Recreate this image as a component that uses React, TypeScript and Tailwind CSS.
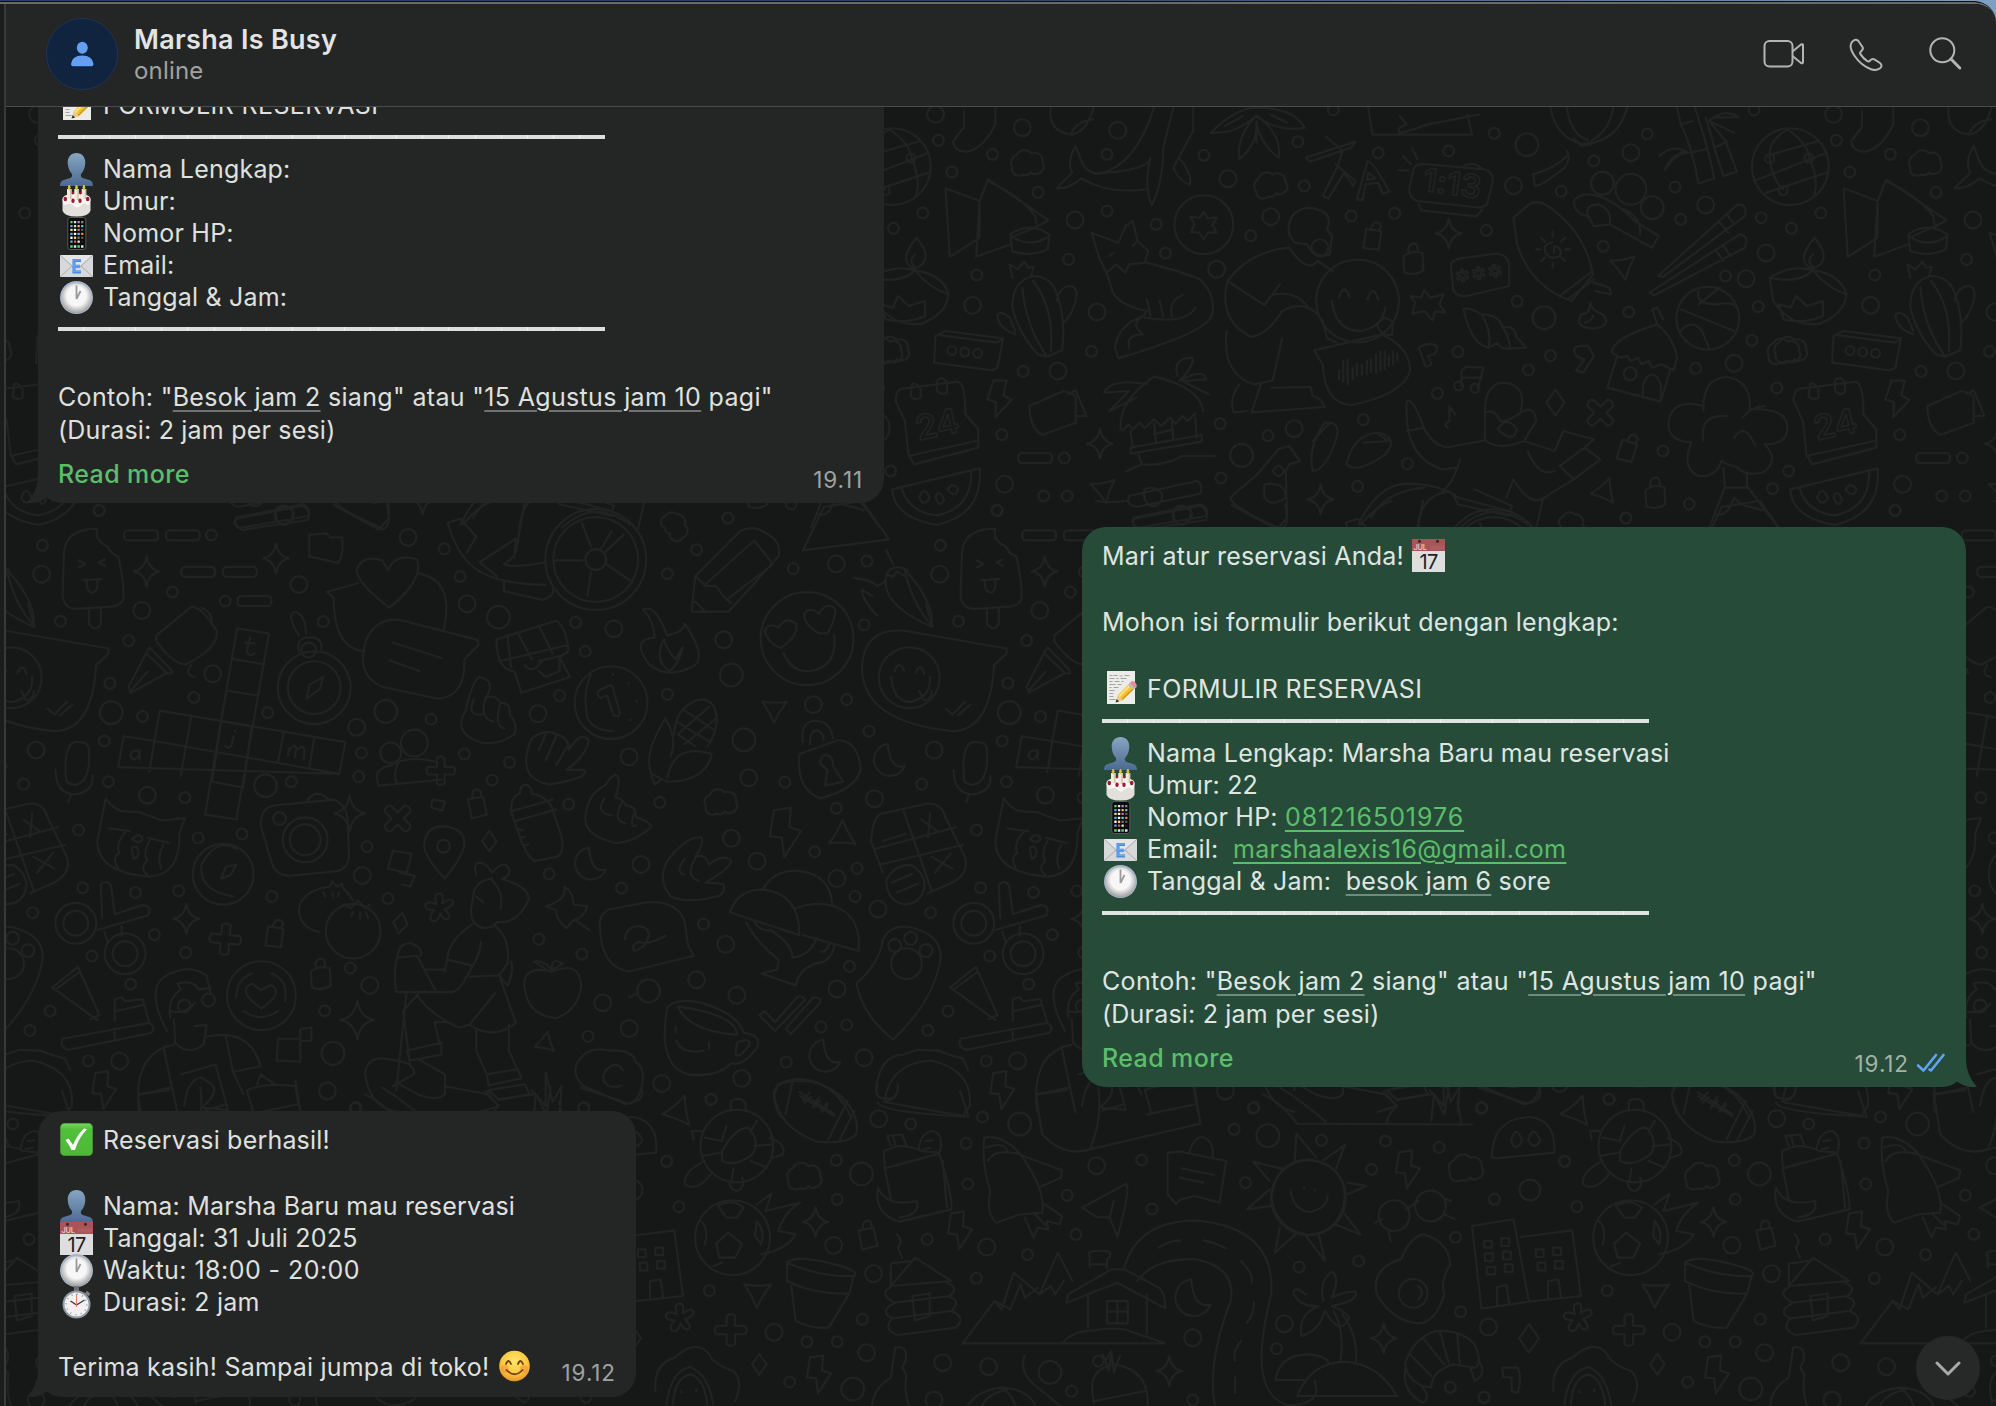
import type { ReactNode } from "react";

/* ---------- Wallpaper ---------- */

type Dot = [number, number, number];
type Stamp = [keyof typeof shapes, number, number, number?, number?];
type Label = [string, number, number, number, number];
type Band = { x: number; y: number; sx: number; sy: number; dots: Dot[]; stamps: Stamp[]; labels: Label[]; paths: string[] };

const PERIOD = 898;

const shapes = {
  cloud: "M-15 3a8 8 0 0 1 4-12a9 9 0 0 1 15-2a8 8 0 0 1 11 9a7 7 0 0 1-4 11q-5 2-7-1a6 6 0 0 1-8 2q-3 2-6 1a6 6 0 0 1-5-8z",
  sparkle: "M0-15Q2-2 13 0Q2 2 0 15Q-2 2-13 0Q-2-2 0-15z",
  bolt: "M-9-17L4-19L3-4L12-1L-1 19L-3 4L-12 3z",
  cross: "M-13-7Q-12-13-7-13L0-6L7-13Q12-13 13-7L6 0L13 7Q12 13 7 13L0 6L-7 13Q-12 13-13 7L-6 0z",
  tri: "M-12-7Q0-7 12-11Q6 0 3 12Q-3 2-12-7z",
  tag: "M-9-6L6-9L10 9L-5 13z M-5-7L-4-14Q0-18 4-14L4-9",
  diamond: "M0-13L9 0L0 13L-9 0z",
  pill: "M-13-5h26q4 0 4 5t-4 5h-26q-4 0-4-5t4-5z",
  moon: "M-2-16A16 16 0 1 0 15 6Q0 10-2-16z",
  flower: "M-3-4Q-6-15 0-15Q5-15 3-5Q12-12 14-6Q14-2 5 1Q13 8 8 11Q4 12 1 5Q-2 15-8 12Q-11 8-5 2Q-15 2-14-4Q-11-8-3-4z",
  lock: "M-9-4Q0-11 10-7L11 10Q2 16-8 12z M-4-8Q-5-16 1-17Q6-17 5-8",
};

const top: Band = {
  x: 880, y: 100, sx: 1.405, sy: 3,
  dots: [[78,40,8],[200,80,8],[82,118,5],[158,160,5],[101,213,5],[222,274,5],[334,88,8],[319,160,5],[455,163,5],[489,233,8],[587,122,5],[637,27,5],[596,255,5],[549,347,8],[521,404,5],[662,345,5],[723,337,5],[700,156,5],[799,150,5],[863,97,5],[909,131,11],[890,254,8],[957,271,5],[1003,180,5],[1055,155,8],[1078,99,5],[1117,258,5],[1160,312,8],[1125,355,5],[1238,350,5],[1228,27,5],[60,336,5],[19,382,5],[274,357,8],[319,330,5],[388,370,5],[401,456,5],[265,475,5],[473,505,8],[852,388,5],[895,601,5],[933,650,11],[1016,436,5],[1052,633,5],[1188,525,5],[1217,533,8],[1245,456,8],[136,522,5],[130,613,8],[305,633,8],[297,751,5],[201,811,5],[250,810,8],[171,1001,5],[259,1071,5],[15,1110,5],[175,1150,8],[230,1185,5],[263,1185,5],[164,1228,5],[478,968,5],[582,983,8],[545,1004,5],[508,1063,11],[479,1131,5],[671,1156,5],[741,1088,5],[679,956,5],[783,877,5],[812,752,5],[911,807,5],[942,764,5],[1146,802,5],[1200,787,8],[1234,617,5],[1225,718,5],[1260,861,5],[1100,1050,5],[1254,1163,5],[1137,1209,5],[1048,1251,5],[1015,247,11],[1055,265,15],[1085,320,11],[455,371,29],[101,749,4],[119,753,4],[137,757,4],[1054,818,6],[1163,652,31],[1279,197,38],[1250,173,4],[1305,171,4],[1269,269,4],[813,855,4],[836,862,4],[671,600,41],[618,440,8]],
  stamps: [["cloud",207,190],["cloud",549,255,-10],["cloud",1270,755],["cloud",18,750],["sparkle",799,397],["sparkle",309,1028],["sparkle",619,1195],["bolt",168,893,10],["cross",1012,935],["tri",313,1170],["tri",1043,500],["tri",1018,1178,-30],["tag",692,410,20],["lock",748,478],["tag",1050,1045,30],["lock",1088,1180],["pill",218,1071],["diamond",949,905]],
  labels: [["1:13",803,262,32,8],["24",82,985,34,-12],["***",843,545,30,-8]],
  paths: [
    "M1245 165L1318 120M1228 240L1330 155M1245 275L1330 215M1250 175Q1255 240 1269 265M1275 85Q1305 130 1306 172Q1320 240 1312 285M1250 170Q1247 120 1275 85",
    "M118 30V78L103 120Q103 150 122 152Q145 145 162 70V20M240 20Q235 90 268 101Q290 95 300 20M268 101Q275 60 300 55",
    "M275 135L282 175Q290 220 310 218Q360 190 385 20M275 135Q262 180 270 215L248 262Q265 265 283 232Q320 280 372 265M380 170Q370 260 382 312Q398 240 398 140L412 20M380 170Q378 210 300 218M420 170Q440 220 435 252Q420 240 412 200L440 90V20",
    "M529 20Q500 20 465 95Q500 100 528 45Q560 95 597 80Q580 20 529 20M528 45Q500 110 505 175Q530 130 529 70Q535 130 560 170Q565 100 530 45M485 75L510 45M572 65L548 40M529 125V60",
    "M686 20L692 101H832L825 40M730 45L740 70Q725 80 730 95L742 90L770 70L842 40",
    "M598 170L668 122L662 140L604 182ZM627 108Q640 130 650 150L642 200L622 285L630 292L652 215L665 255L668 240L640 190M685 180Q692 180 716 272L706 278L700 245L682 250L678 298L670 295ZM686 215L696 232L684 236Z",
    "M750 200Q755 186 770 190L850 205Q862 215 861 240L853 310Q848 322 835 318L755 300Q742 290 744 260ZM757 310L760 328L838 346L846 326M820 195Q835 178 847 205M735 165L746 190M748 142L755 175M728 208H742",
    "M942 20Q950 110 985 128Q1035 130 1050 20M965 20Q970 100 995 118M1030 20Q1025 90 1000 118M975 112L985 135L998 130M965 150Q972 170 962 200Q930 255 920 255L918 220Q950 200 965 165",
    "M975 300Q985 270 1010 285Q1040 310 1060 360L1094 405L1085 440L1025 370L1003 376L995 345Q975 340 975 300M995 345Q990 310 1010 310Q1030 330 1025 370M1045 325Q1070 350 1068 400",
    "M1120 20L1125 70Q1140 130 1150 248L1172 232Q1165 150 1145 20M1125 70L1142 60M1138 155L1160 145M1160 50Q1168 100 1172 140L1185 225L1204 212L1188 120L1165 60M1172 140L1190 122M1095 165Q1115 125 1135 155Q1120 155 1103 205Q1108 170 1130 150M1165 60Q1185 20 1206 48L1175 50M1165 60L1200 95",
    "M92 262L98 468L140 410V300ZM140 300L152 235L237 358L222 375L184 410V430L135 467ZM152 240Q200 290 218 345L220 370M183 400Q210 360 238 400L236 445Q210 470 186 450ZM184 405Q210 445 238 405",
    "M1313 410Q1285 480 1310 503Q1340 480 1313 410M1311 460Q1300 480 1311 498M1250 530Q1280 490 1311 508Q1350 520 1358 580Q1355 640 1320 668Q1280 680 1255 600ZM1250 530Q1290 550 1311 508Q1330 560 1358 580M1270 655L1262 610L1280 620L1287 585L1302 615L1325 600V645Q1300 670 1270 655",
    "M215 525Q185 540 186 620Q195 700 222 760L235 767L256 748Q262 640 245 560Q235 525 215 525M200 560Q205 680 235 767M215 540Q245 620 240 750M186 530L182 490L193 505L203 482L208 500L216 498L212 525M248 600Q252 560 265 555Q280 555 275 600Q268 650 256 668M190 700Q165 680 165 640Q172 630 182 650L190 690",
    "M78 705L92 690L173 712L165 800L157 808L76 785ZM85 703L165 725L173 712",
    "M318 515L308 470L297 395L335 425L345 375L355 360L362 420L377 450L372 485L350 490L345 515L332 490L318 515M322 465L328 455M355 435L360 425M375 485Q420 510 450 535Q475 590 465 650Q450 700 335 772L330 740Q335 670 370 645L375 630Q330 610 325 560L318 515M370 645Q350 670 370 700Q345 700 350 740M372 650Q430 670 443 620M375 595L380 645M393 600L398 645M410 645Q405 600 425 582",
    "M455 333L460 352L473 350L467 372L473 395L461 395L455 414L448 395L437 393L442 370L436 348L449 350Z",
    "M575 400Q570 330 602 320Q640 330 628 385L635 405L632 460Q610 475 600 430L582 425ZM575 440Q600 520 615 480M575 440Q520 450 488 540L540 612L562 550M488 540Q475 660 522 708Q545 700 565 630Q600 590 622 660L628 712L642 725M552 580Q585 570 600 615M615 480L636 510M487 690Q480 820 525 850L552 838L565 712M550 860L605 858L608 885Q620 890 625 918L522 934L535 850M505 850Q490 890 497 935L515 930",
    "M635 600Q640 690 675 690Q705 680 710 620M645 590Q652 540 660 590M685 595Q692 545 700 595M708 650L698 670Q705 710 720 700V660Z",
    "M610 748L705 700Q745 740 745 810Q735 880 663 912Q625 910 622 790ZM645 808V835M651 780V842M657 775V850M664 800V835M670 788V825M677 790V822M684 780V820M690 775V815M697 760V815M703 752V808M709 750V805M715 765V795M721 752V790M727 758V780",
    "M802 490Q803 478 815 472L865 458Q882 460 884 490V555L822 586Q806 585 805 560Z",
    "M890 350L912 310Q925 295 938 315Q990 390 1002 520L972 600Q915 560 895 430ZM958 580L1000 512M968 592L1003 535M1003 545L1025 560L1027 580L1005 570M945 425Q930 430 935 455Q942 480 955 465Q960 440 947 435V455M945 392V408M945 485V500M922 445H928M963 445H970M929 410L934 422M963 410L957 422M929 480L934 470M963 480L957 470",
    "M765 568L773 590L792 580L786 610L794 635L780 632L776 658L765 630L748 638L752 605L745 585L760 590Z",
    "M820 625Q825 615 845 640Q870 640 875 680L885 678Q895 690 893 705L908 740L885 743Q870 745 868 725L855 740Q830 730 820 625M845 640Q860 690 855 740M875 680Q885 710 885 743",
    "M998 605Q998 640 985 640Q975 680 1002 683Q1030 675 1015 640Q1000 630 998 605M990 665Q1000 660 1002 645",
    "M1093 525L1205 310Q1220 310 1215 345L1100 528ZM1081 575L1208 400Q1222 405 1215 440L1088 583ZM1190 340L1200 370M1180 365L1192 395M1185 435L1195 465M1175 450L1185 480",
    "M1125 625L1200 690M1150 570Q1145 610 1175 610Q1200 600 1203 620M1180 560L1150 610M1125 690Q1140 650 1155 690L1165 742",
    "M1092 670L1085 625L1092 620L1100 655M1092 670Q1030 710 1028 755L1040 770L1050 765L1055 780L1065 770L1070 790L1080 780L1085 800L1098 790L1115 808L1120 770Q1115 710 1092 670M1035 770L1022 860L1097 902L1110 810M1072 885V850Q1085 790 1097 850V900",
    "M22 900Q22 860 35 862L110 842Q120 850 120 940L138 985V1040L48 1090L40 1060L35 960ZM40 1065L135 1020M45 850Q50 840 57 865V890Q48 900 43 885ZM80 840Q87 820 94 845V875Q85 885 80 868Z",
    "M210 915L258 870Q275 880 275 890V965L228 1002Q210 980 210 915M265 880L275 868L290 945L275 945",
    "M338 985Q335 900 385 826Q450 860 454 930M340 988L350 970L355 985L365 965L372 982L385 955L395 975L408 950L415 968L425 945L432 960L443 938M352 990L355 1040M443 950L445 1010M352 1040L452 1002V1022L352 1058ZM362 1055L368 1090L345 1112M368 1090Q400 1095 425 1065H470M385 968L388 1025M410 960L412 1015M385 1000L412 985M418 825Q410 770 440 770Q440 800 420 840Q455 800 458 835L425 840L462 880M375 850Q325 830 315 875L350 870L322 930L360 890",
    "M350 1185L445 1140Q455 1150 450 1178L360 1218Q345 1210 350 1185M372 1165Q385 1150 397 1180Q395 1220 380 1215Q368 1200 372 1165M357 1250L450 1210Q463 1220 458 1245L365 1280Q350 1275 357 1250M412 1225Q425 1200 437 1230Q435 1275 420 1270Q408 1260 412 1225",
    "M17 1165L140 1102Q145 1240 80 1272Q20 1250 17 1165M30 1160Q40 1235 80 1243Q130 1220 128 1110M55 1190Q62 1150 70 1190Q62 1220 55 1190M78 1190Q82 1160 90 1195Q85 1225 78 1190M95 1165Q102 1140 110 1165Q105 1195 95 1165",
    "M817 855V810L823 797L848 800L840 862M818 830L845 830M757 740Q770 720 782 735Q785 760 770 765L775 790L767 798ZM975 745Q980 730 995 735L1003 765L988 815L978 808L990 775Q975 770 975 745M798 980Q790 970 800 960V915L808 940",
    "M740 900Q748 885 765 985Q780 1040 800 1038L850 1018V935Q862 920 872 960Q885 960 900 935Q920 910 922 960Q910 1000 905 1020L948 1050L960 990L1003 1015L990 1040L1012 1075L975 1135L955 1095L990 1040M740 900Q735 1070 790 1105L812 1100M815 1075Q805 1150 790 1170M850 930Q850 850 875 845Q910 850 900 930M910 1050Q925 1130 948 1110M890 1135Q915 1230 940 1180L975 1135M890 1135L880 1190M932 1190L922 1280M868 985Q880 940 895 985Q890 1030 868 985M850 1018Q870 1050 905 1020M740 990L765 980",
    "M625 965Q650 960 640 1020Q625 1110 608 1110Q600 1040 625 965M608 1020L632 965M655 1090Q665 1000 700 995Q730 1010 710 1060Q670 1120 655 1090M680 1025L715 1020L700 1000",
    "M560 1045L575 1035L590 1080L575 1090L570 1110L572 1250L560 1280Q495 1220 492 1190L530 1120ZM540 1150Q570 1140 570 1190Q550 1220 540 1190ZM552 1110Q560 1080 568 1110Q560 1140 552 1110",
    "M672 1270Q700 1150 740 1148Q790 1150 812 1190L885 1230L888 1215L835 1165M755 1280Q760 1180 800 1172M690 1250Q710 1170 765 1160M815 1280Q860 1190 910 1270M805 1180L812 1210L885 1245",
    "M1157 930Q1155 830 1190 828Q1225 840 1222 925Q1275 920 1275 980Q1275 1030 1243 1030Q1265 1080 1240 1115Q1215 1125 1205 1100Q1190 1090 1182 1080Q1175 1130 1150 1125Q1125 1100 1140 1025Q1105 1020 1108 960Q1115 890 1157 915M1157 1020Q1150 940 1190 945M1212 950Q1225 915 1243 915M1200 1010Q1215 960 1230 1035M1185 1100L1187 1160L1165 1280M1218 1115V1155L1262 1280M1187 1160H1218M1175 1240Q1190 1250 1200 1190L1210 1210L1240 1228",
  ],
};

const middle: Band = {
  x: 0, y: 500, sx: 1.4385, sy: 2.529,
  dots: [[143,24,5],[61,112,5],[60,185,8],[248,230,5],[204,277,8],[87,304,5],[185,353,5],[304,86,5],[324,253,5],[430,211,8],[465,305,5],[587,92,8],[639,121,5],[662,191,5],[672,260,8],[717,294,11],[828,307,5],[883,323,8],[842,380,5],[960,184,5],[1002,123,5],[1047,43,5],[1141,171,5],[1203,159,8],[1247,152,5],[1243,313,5],[1041,351,8],[1052,440,11],[306,437,8],[279,497,5],[385,535,5],[160,535,11],[205,545,5],[158,461,5],[150,607,5],[52,630,8],[34,716,5],[156,710,5],[212,744,8],[266,750,5],[382,720,11],[419,710,5],[513,572,8],[555,532,11],[620,552,5],[668,640,5],[708,706,5],[733,661,5],[774,538,8],[805,492,5],[960,489,5],[905,647,8],[1070,604,11],[1170,515,8],[1218,502,5],[1250,582,5],[1077,700,8],[1129,711,5],[818,767,5],[949,762,5],[1203,777,5],[1258,753,8],[1172,887,5],[1052,853,8],[1089,911,8],[922,919,8],[790,943,5],[894,979,5],[1012,1070,5],[1230,1000,5],[1233,929,5],[1204,955,8],[1263,1032,8],[1222,1177,5],[1044,1121,8],[837,1146,5],[775,1108,5],[867,1269,8],[933,1239,11],[1002,1211,8],[1060,1250,8],[1204,1234,8],[1181,1330,5],[1218,1325,5],[1243,1408,8],[1131,1419,5],[905,1334,8],[846,1354,5],[952,1473,8],[1067,1460,8],[1023,1513,5],[840,1534,5],[512,1534,5],[471,1492,8],[479,1397,11],[532,1225,8],[504,1181,5],[467,1289,5],[267,1142,5],[222,1097,5],[257,986,5],[195,990,5],[119,978,5],[47,1041,5],[132,1151,5],[188,1222,5],[72,1290,5],[43,1339,5],[127,1416,5],[172,1416,8],[391,1000,5],[521,947,8],[528,874,5],[348,842,5],[285,852,5],[113,832,5],[558,1005,5],[516,697,5],[520,637,5],
    [857,148,50],[857,148,42],[857,148,10],[1161,348,46],[452,472,36],[452,472,26],[444,377,7],[879,510,36],[439,857,22],[439,857,15],[402,803,6],[321,944,30],[638,873,6],[376,1251,34],[109,1068,20],[109,1068,12],[180,1145,20],[180,1145,12],[1308,447,30],[596,612,13],[562,637,10],[1304,1170,15],[1287,1124,6],[1310,1106,6],[1332,1137,6],[265,1277,6],[300,1262,6],[508,1088,27]],
  stamps: [["pill",203,87],["pill",263,87],["pill",285,179],["pill",345,179],["pill",366,253],["sparkle",211,178],["sparkle",397,145],["sparkle",514,1313,0,1.3],["sparkle",268,1057],["sparkle",503,790,0,1.2],["cross",572,803],["cross",324,1108,50],["tag",395,1098,20],["lock",460,1200],["tag",686,770,0],["diamond",576,1068,10,0.8],["cloud",1037,765],["moon",1280,655],["moon",850,917],["moon",1187,1403],["bolt",1130,838,0,1.3],["bolt",150,1490],["tri",1112,530,10],["tri",785,1375,-40,0.8],["tri",1213,852,-50,1.1],["diamond",704,860,0,0.8],["flower",632,1030],["cloud",970,65,60,0.9],["cross",634,682,45,0.9]],
  labels: [],
  paths: [
    "M92 130Q95 70 140 70Q135 100 155 115Q160 135 170 140Q178 200 178 245Q175 265 160 267L110 273Q92 272 90 240ZM128 272V310Q138 335 145 310V270M113 150L123 160L113 168M150 148L142 156L151 164M120 200L146 197M125 200Q124 230 133 232Q142 228 140 198",
    "M340 45L435 12Q448 25 443 48L350 73Q335 65 340 45M397 25Q410 0 423 30Q420 62 407 60Q395 55 397 25M445 85L470 82L475 92H492Q495 130 487 157L445 140ZM480 10L545 72Q565 75 557 10",
    "M644 55L662 45L685 90L672 130M644 55Q660 150 690 178Q720 210 785 212M690 155L742 95L740 140L725 160Q740 170 785 155M725 205V228L780 250Q800 240 795 215M665 60Q690 10 710 0M755 0L742 130M690 155L715 190",
    "M995 280L1000 190L1065 75Q1085 60 1100 80Q1125 100 1120 140L1048 280ZM1000 190L1015 215L1030 215L1040 240L1052 260M1015 210L1085 100L1112 160L1045 250M1000 255L1015 280M1155 125L1185 15M1185 15L1240 0L1279 97L1155 125",
    "M837 55L850 115M880 75L865 120M797 150H838M872 160L910 205M850 180L845 240M897 85L870 130",
    "M560 270Q515 210 513 175Q520 135 550 150L558 175Q570 130 600 148Q610 200 560 270M515 208L470 230L480 245Q480 375 525 380M602 183Q655 200 638 328",
    "M527 350Q545 285 585 305L688 352V365L668 400Q670 495 630 500L550 470Q510 440 527 350M565 358L635 397M560 403L603 430",
    "M714 350L800 303Q815 320 818 380L805 395L820 445L750 485L740 430Q715 430 714 350M735 420L730 340M765 400L745 335M795 385L775 315M718 405L815 365M755 415Q765 440 780 405M775 405L805 392V430L785 445L775 430M740 430L745 460",
    "M925 275Q940 260 955 320L960 340Q985 330 985 310Q1020 400 995 420Q960 450 935 415Q905 350 942 345Q940 300 925 275M962 430Q940 400 955 350Q960 380 972 400L982 370Q975 420 962 430",
    "M1123 372Q1105 360 1100 330Q1105 305 1120 320Q1130 290 1145 310Q1150 340 1123 372M1178 335Q1155 310 1157 285Q1165 265 1178 285Q1190 250 1202 275Q1200 310 1190 335ZM1127 385Q1140 435 1165 430Q1205 420 1200 340",
    "M1228 195Q1255 200 1262 215Q1275 205 1275 190Q1265 260 1340 318Q1345 260 1305 180M1262 290Q1240 250 1240 225L1255 240M1275 185Q1285 155 1305 175L1302 190L1290 178L1285 192ZM1285 160L1275 125",
    "M1240 430Q1240 320 1300 328L1448 373V385L1430 415Q1425 580 1370 582Q1245 560 1240 430M1282 445Q1285 510 1310 508Q1340 495 1338 445M1287 430Q1293 400 1301 430M1317 435Q1324 405 1330 438M1322 480L1330 505Q1342 500 1340 480M1360 525L1370 540L1388 508M1378 542L1396 515",
    "M225 340L275 268Q290 265 312 330Q315 370 268 413Q250 415 225 355ZM215 370L245 425Q252 440 240 435L210 385ZM210 385L185 470L188 485L240 435M188 480L212 432M275 415Q265 440 280 445M290 270Q305 280 305 310",
    "M341 322L387 335L340 805L295 793ZM336 400L380 413M328 480L370 492M318 557L362 570M306 710L350 725M230 530L497 610L488 690L170 673L178 595L222 607ZM275 545L260 695M222 607L215 685M318 560L305 710M362 570L350 720M408 585L400 660M452 598L445 675M222 607L488 690",
    "M360 345Q355 370 356 385Q360 395 366 385M352 358L366 360M199 632Q188 628 188 645Q192 662 199 645L201 630V655M336 595L333 618Q330 628 324 620M338 580V583M416 625L414 645M416 630Q424 612 426 625L424 648M427 630Q436 615 438 628L437 652",
    "M430 340Q410 285 425 280Q440 290 440 335M430 380Q425 345 445 345Q465 345 462 375M441 500L445 465L465 445L460 475Z",
    "M690 445Q715 455 698 500Q710 485 720 510Q735 510 733 540Q745 560 740 590Q715 620 690 610Q650 585 670 530Q680 450 690 445M682 500Q670 545 695 540M698 500Q690 550 710 558M720 510Q710 570 725 575",
    "M765 600Q785 575 800 590Q820 600 818 630Q835 580 847 605Q845 640 815 680L840 680Q850 700 790 717Q740 700 765 600M785 590L775 630M800 595L785 655M818 615L800 668",
    "M861 480L877 466Q881 466 882 475L892 538Q889 548 883 542L873 492L864 498Q858 492 861 480M850 440Q838 480 845 550Q855 580 880 582M882 437V440M904 460V463M916 505V508M907 552V555",
    "M1000 505Q1015 495 1025 515Q1040 560 1018 620M1000 505Q970 530 970 590M957 550Q925 640 937 690L960 710Q1015 710 1024 640Q970 610 960 700M957 550Q975 600 965 645M937 695L942 718L950 705M985 530L1028 580M975 560L1022 610M1020 520L975 590M1030 550L985 615M975 590L1000 620",
    "M1155 610Q1150 555 1175 556Q1195 560 1198 600M1165 615Q1165 580 1175 580Q1185 585 1185 605M1150 640L1205 605Q1235 605 1238 680Q1230 730 1180 752Q1145 730 1150 640M1180 665Q1180 640 1190 643Q1200 650 1198 670L1213 710L1187 720L1190 680Z",
    "M95 705Q90 600 115 610Q130 610 128 640Q130 710 108 718Q95 715 95 705M80 680Q80 740 108 742Q135 735 133 695M102 742L98 762M545 720L635 705M545 720Q535 680 560 670L575 658Q600 645 628 660M570 715Q565 680 575 658",
    "M152 752Q165 785 180 785L200 787L233 808L266 802L258 840Q260 945 215 950Q140 940 140 860ZM157 828L187 835M213 852L243 865M180 838Q165 870 172 890Q160 900 170 930M215 860Q205 890 212 910Q200 930 212 945M235 870Q225 900 232 930M190 885Q188 870 197 875Q203 900 192 905ZM190 855Q200 835 205 855Q200 870 190 855",
    "M375 820Q375 775 395 770L480 755Q500 770 500 810L502 900Q500 935 480 937L415 948Q395 945 390 910ZM442 758Q455 725 473 755M318 955L325 925L340 920L332 945ZM340 880Q310 850 290 920Q285 985 335 1000",
    "M640 955Q605 890 611 860Q615 820 640 823Q670 830 668 870Q665 900 640 955M565 885L592 892L585 940L558 930ZM575 940L597 948L590 975L578 970M622 755L640 760L636 783L620 775Z",
    "M735 785Q735 745 748 740Q748 715 758 718Q765 725 765 740Q790 750 795 780L808 850Q812 895 800 900L770 910Q760 905 750 860ZM735 785L795 755M740 810L800 780M745 830L752 833M748 850L755 850M752 872L760 868",
    "M885 692Q895 700 885 750Q895 750 900 770Q915 770 915 800Q935 810 937 825Q910 865 885 865Q840 845 842 800Q845 740 870 720Q880 695 885 692M870 750Q855 790 880 795M895 760Q880 810 900 815M912 790Q905 830 915 820",
    "M1008 850Q1015 860 1000 900Q1015 890 1020 920Q1040 890 1052 910Q1050 930 1015 965L1040 968Q1045 985 1035 998Q990 1020 965 1000Q945 960 960 910Q985 850 1008 850M985 905Q970 940 985 945M1000 905Q985 950 1005 960",
    "M1050 1040Q1060 985 1095 982Q1150 990 1150 1098ZM1098 980Q1115 930 1150 936Q1195 945 1197 1020M1145 1030Q1175 1010 1200 1025Q1240 1050 1235 1138L1155 1098M1073 1065Q1090 1120 1120 1160L1118 1185L1095 1195L1145 1225Q1150 1175 1185 1165Q1200 1150 1200 1120M1085 1065Q1095 1090 1108 1085M1108 1085Q1140 1120 1140 1155Q1165 1150 1175 1105M1180 1140Q1190 1140 1193 1120",
    "M1253 860Q1255 795 1270 790L1335 765Q1355 765 1360 800L1388 900Q1395 940 1370 965L1335 992M1253 860L1270 940M1300 785L1340 985M1258 880L1375 825M1265 920L1385 870M1270 860L1302 842M1325 805L1348 835M1338 790L1335 850M1340 900L1370 930M1368 890L1345 940M1275 960Q1285 920 1310 920Q1330 940 1330 975Q1325 1020 1300 1020Q1275 1010 1275 960M1283 965L1312 943M1290 990L1320 968",
    "M147 1055L145 970Q155 955 160 975L165 1045L205 1022Q220 1025 213 1048L140 1085M150 1090L155 1115M175 1075V1100M460 1090Q430 1080 430 1030Q435 985 475 975L478 962L485 975L492 968L493 978Q500 990 508 1010M465 990L468 1000M478 990L480 1005M488 990L486 1000M495 1020L505 1030L515 1010L525 1030L532 1020M508 1040L505 1050M518 1040L518 1055M526 1040L530 1055",
    "M685 945Q680 915 690 915Q700 915 708 940Q725 905 732 930Q735 950 722 955Q765 980 760 1010Q745 1070 715 1065L710 1075Q690 1090 680 1060Q675 1040 680 1010Q680 960 708 955M708 960Q725 990 720 1030M685 1000L695 1015M680 1070Q645 1110 643 1160L680 1175Q690 1150 692 1115M713 1075Q735 1110 730 1170L718 1200L675 1203M610 1185H640M643 1160L640 1190M680 1175Q660 1245 650 1242H570Q565 1180 572 1155L600 1150L627 1240M572 1155Q572 1120 590 1118Q610 1130 605 1150M585 1240L570 1490M605 1240L580 1290L590 1430M735 1165Q740 1190 730 1225L718 1200L742 1320Q710 1365 675 1325L712 1245M600 1250Q620 1300 660 1332L675 1325M585 1390L635 1370V1400L590 1415ZM625 1318H642M625 1318L632 1370M685 1335V1390L700 1450M732 1325V1390L745 1440M700 1450L745 1437L750 1460L703 1478ZM703 1490L755 1475L762 1500L718 1515Z",
    "M785 1025Q815 1010 812 975Q825 990 825 1020L845 1025Q840 1055 825 1060L815 1080Q800 1060 800 1035ZM828 1060L848 1085M755 1235Q750 1190 775 1185L795 1190Q835 1160 836 1230Q830 1290 800 1308Q760 1300 755 1235M790 1190Q765 1160 768 1165Q785 1160 795 1190Q790 1150 810 1170L790 1190",
    "M863 1080Q860 1035 885 1030L930 1015Q975 1010 985 1065L990 1125L998 1150L905 1190Q865 1180 863 1080M905 1255L918 1245M899 1108Q900 1080 915 1075Q935 1075 933 1100Q930 1130 912 1138Q908 1118 920 1115Q930 1125 957 1100",
    "M960 1280Q975 1255 1010 1270Q1060 1295 1070 1345Q1095 1350 1090 1380Q1070 1430 1052 1422Q1030 1460 990 1450Q945 1430 960 1280M975 1278Q990 1340 1060 1350Q1060 1300 975 1278M1060 1370Q1080 1355 1078 1375Q1065 1410 1058 1400ZM973 1365Q980 1400 1012 1390M972 1330V1345M1020 1370V1385",
    "M1092 1300L1115 1340L1158 1262Q1152 1245 1145 1258L1115 1318L1100 1290ZM1130 1335L1170 1255Q1185 1255 1178 1272L1138 1348Z",
    "M1232 1220Q1265 1170 1270 1110Q1280 1070 1310 1078Q1360 1100 1352 1170Q1340 1270 1285 1362Q1240 1300 1232 1220",
    "M75 1230L112 1178L143 1300L130 1310M75 1230L130 1300L140 1312M80 1235L115 1190M165 1315V1260L175 1255L180 1265L205 1260L215 1320M90 1360L215 1320Q225 1330 218 1345L98 1388Q85 1380 90 1360M165 1335V1362M167 1290L205 1275",
    "M240 1340Q210 1240 235 1205Q270 1165 297 1200L303 1245M245 1305Q240 1260 260 1235L255 1220Q280 1210 285 1235L303 1232M245 1290Q265 1300 280 1270M250 1310L252 1370Q270 1405 293 1375L297 1325L280 1328M200 1545Q190 1395 250 1375M295 1355Q360 1330 375 1430L335 1443L325 1355M200 1500L243 1490M235 1380L255 1545M260 1450L310 1425L328 1540L293 1535M265 1530Q270 1460 290 1458L300 1470Q320 1490 290 1535M355 1490Q380 1470 425 1480L432 1550M355 1490L365 1550M370 1475L375 1450L395 1475M335 1443L350 1500",
    "M376 1283Q340 1240 362 1220L376 1238Q395 1210 397 1245Q395 1260 376 1283M362 1195Q340 1210 340 1255M390 1195Q415 1210 410 1265M350 1290Q375 1320 400 1290M400 1360H432V1418L398 1415ZM432 1335L448 1332V1365H432Z",
    "M525 1445Q530 1400 560 1412Q600 1420 595 1450L565 1480M525 1445Q530 1530 570 1545M600 1410L640 1450V1500Q630 1520 600 1500L570 1470M640 1480L700 1500L718 1530L690 1545M765 1490L785 1530L785 1445L795 1520L808 1480L805 1545",
    "M840 1400Q855 1380 875 1390Q910 1385 915 1420Q930 1435 922 1490Q915 1525 900 1525L840 1480Q815 1440 840 1400M896 1440Q890 1420 880 1428Q866 1440 868 1465Q875 1490 895 1478",
    "M1260 1490Q1265 1400 1300 1400L1320 1388L1350 1390L1365 1400L1385 1410L1393 1440M1272 1520Q1280 1420 1340 1415Q1400 1440 1395 1530L1385 1555L1272 1520M1285 1510Q1255 1520 1262 1480",
    "M1113 1500Q1115 1465 1150 1462Q1200 1465 1225 1560M1113 1500Q1115 1540 1125 1560M1140 1470L1130 1550M1150 1495L1200 1550M1155 1515L1165 1495M1170 1530L1178 1508M1182 1545L1190 1522",
    "M40 260L50 318Q20 260 10 175M285 0Q300 5 330 0",
  ],
};

const bottom: Band = {
  x: 640, y: 1080, sx: 1.1563, sy: 3,
  dots: [[82,55,5],[31,241,5],[45,377,5],[227,238,5],[228,355,5],[276,113,8],[313,129,5],[396,108,5],[377,187,5],[439,129,11],[256,279,11],[379,309,5],[494,343,5],[528,254,8],[580,237,5],[687,145,5],[709,82,5],[726,164,11],[788,178,5],[862,180,5],[924,199,5],[973,82,5],[1069,241,5],[846,265,5],[700,305,5],[592,384,5],[504,460,5],[448,521,5],[401,498,8],[332,475,5],[224,493,8],[270,578,8],[389,592,5],[80,629,5],[257,715,5],[155,754,8],[193,782,5],[228,782,5],[262,815,8],[350,845,8],[403,857,8],[474,874,11],[173,903,5],[246,924,11],[340,957,8],[499,931,5],[639,770,8],[639,957,5],[745,728,8],[736,803,5],[762,558,5],[831,540,5],[988,355,5],[943,469,5],[949,692,5],[981,738,8],[937,919,5],[976,949,5],[1029,327,10],[872,404,15],[914,375,15],[773,350,37],[107,470,37],[112,195,36],[530,840,5],[894,637,14]],
  stamps: [["cloud",190,290,0,1.05],["cloud",955,265,0,1.05],["bolt",888,265],["bolt",370,448],["bolt",207,880],["sparkle",203,423,0,1],["sparkle",612,870,0,1],["sparkle",860,772,0,1],["tri",134,640,10,1.1],["tri",45,100,-30,1.2],["flower",46,712],["cross",105,747,45],["diamond",1028,772,0,1.1],["diamond",138,850,0,0.8],["moon",640,650,0,1.15],["tag",263,467,0,1]],
  labels: [],
  paths: [
    "M160 10Q200-20 230 40Q255 100 250 160Q240 190 205 182Q160 140 155 40ZM185 45L225 105M190 65L198 48M200 80L208 60M210 92L217 72M218 175L240 60M230 180L248 90",
    "M95 210Q110 140 125 140Q140 180 130 220Q110 260 95 240ZM100 135L95 175M135 120L128 150M153 190L132 195M147 260L128 240M106 298L108 262M72 225L93 215M75 170L95 180M75 240Q50 270 52 310Q65 335 82 280M105 88V60Q115 45 122 65V90M150 170Q170 190 165 220L152 232M62 175L60 150L72 150M103 300Q105 330 112 330Q122 320 118 290",
    "M283 262L346 218Q362 350 360 385L300 422Q270 400 275 320Q285 380 320 360Q325 400 300 410M283 262L282 210L298 195Q315 195 325 210L345 215M290 195L286 165L303 160L308 192M295 190L293 168M322 205Q325 150 340 150Q352 165 346 218M330 180L338 178M328 205L336 200M283 262L290 355M350 240L355 380",
    "M398 170Q420 160 440 220Q470 330 465 395L440 400L412 425Q400 400 405 330Q395 250 398 170M400 200Q420 180 425 210M402 240Q410 200 440 220M440 222L488 268L487 290L462 318M465 365L488 405L485 430L470 420L472 445L460 440L455 470L445 410M455 395L470 435",
    "M511 380L562 308Q568 320 552 467L543 410L528 408ZM543 410L548 358M610 215L625 212L678 240L670 365L642 345L625 355L620 370L610 340ZM635 215Q640 170 650 168Q665 180 662 230M626 262L664 282M624 290L651 305",
    "M730 350Q735 240 773 235Q815 250 815 350Q810 455 773 462Q735 445 730 350M745 265L709 242L728 300M757 240L759 158L782 230M790 238L815 192L805 262M818 305L840 315L818 340M815 400L833 460L803 430M785 462L792 540L770 465M740 440L734 515L758 460M730 375L702 385L728 325M752 325Q755 390 775 393Q795 380 795 345M768 318V322M780 325V330",
    "M858 415L850 425M932 355L938 360M930 400L942 415M865 445L868 480M886 385L900 360M985 230Q985 110 1030 108Q1060 120 1057 215L990 232ZM1007 180Q1013 125 1020 180Q1013 215 1007 180M1027 178Q1033 125 1041 180Q1033 210 1027 178",
    "M560 560Q575 420 643 418Q735 440 730 640Q700 940 750 973Q790 970 780 900M575 600Q595 530 643 535Q690 560 683 660Q655 850 665 978M600 500Q612 478 625 478M652 478Q665 485 677 502M695 540Q710 580 707 605M710 665Q710 700 702 725M695 780Q685 810 688 838M688 890V935",
    "M373 787H607L560 745Q540 740 525 748Q500 750 490 782M373 787L410 660L418 685L432 575L462 640M410 660L428 685L440 610L445 650L460 620M462 640L483 515L500 600M462 640L475 615L480 640L490 600M493 665L552 605L607 682Q608 640 600 620L560 565H545L495 640ZM518 640V740M586 640V760M540 660H564V727H540ZM552 660V727M540 692H564M520 560V525Q515 510 530 510H540Q548 520 540 535V560M520 550H540",
    "M770 640Q755 610 756 640Q765 680 785 675Q760 700 765 765Q785 750 792 690Q810 770 820 710Q815 690 800 675Q830 660 828 632Q815 630 800 650Q810 590 800 572Q785 600 790 660M802 690Q815 750 810 840M812 700Q830 760 828 840M735 895Q740 820 773 820Q795 825 797 850M735 897H768M760 945Q775 845 815 842Q855 850 875 945Z",
    "M905 460Q935 480 937 550Q925 600 930 640Q920 725 900 727Q870 720 852 640Q845 560 880 535Q890 470 905 460M900 615Q908 635 900 655",
    "M962 435L1010 415L1028 662L973 683ZM1018 468L1078 448L1088 645L1028 662M976 480H985V500H976ZM996 472H1005V495H996ZM977 517H986V540H977ZM998 512H1007V535H998ZM979 558H989V580H979ZM1000 550H1009V573H1000ZM1036 505H1045V528H1036ZM1056 500H1065V522H1056ZM1038 545H1047V568H1038ZM1058 540H1067V563H1058ZM991 670V618L1002 612L1005 668M1050 650V600L1062 595L1065 648",
    "M90 375Q105 350 120 380L112 410H100ZM88 488L102 455L118 488L110 530H92ZM135 420Q145 450 140 490L133 465ZM70 420Q80 440 75 490M85 555L95 545M135 370L152 338L145 390L185 365Q165 400 160 450L180 460Q170 505 140 520",
    "M170 545Q180 520 225 550Q255 570 247 585Q210 590 170 545M170 545V600Q200 640 242 638L247 585M175 615L180 720Q200 745 218 740L242 638",
    "M290 615L318 530L360 600L290 615M290 548V610M290 548L312 540M297 460Q305 480 298 500L303 530M290 618Q275 640 295 665L358 645Q370 620 355 605M295 665Q275 690 292 712L360 690Q372 660 358 648M292 712Q280 745 298 762L365 740Q378 710 360 690M315 645L335 638V705L318 718Z",
    "M18 930Q15 850 40 830Q65 770 80 820Q85 850 108 870Q120 900 110 960M30 978Q35 870 58 858Q80 880 85 978M38 970Q40 890 58 880Q75 890 78 978M48 930V935M65 925V930",
    "M295 800Q310 790 307 840L303 860L308 880Q305 940 312 978M295 800L290 890Q270 920 268 978M445 825Q435 880 470 940L487 978M378 978Q390 925 420 920Q450 925 458 978M395 978Q400 940 425 925M435 978Q430 940 420 925M525 965Q515 860 550 850Q590 870 587 978M525 960L585 930M545 810L538 840L535 820L542 870L545 812L548 875L555 825L550 860",
    "M885 845Q895 770 920 750Q950 745 965 790Q975 850 965 860L940 850Q915 870 915 920L905 915Q885 890 885 845M905 770L930 850M925 752L935 845M945 760L948 850M890 820L915 885M885 860Q880 930 905 965Q915 950 905 920M970 840Q980 880 965 900L960 860M997 860H1015Q1020 890 1015 935L1008 930V890L998 888Z",
    "M275 65Q280 95 380 107L370 30M285 60Q300 50 298 10M458 42L495 20M458 42L465 160Q490 230 520 205L648 128L640 0M535 88L560 70M586 100L642 70M520 205Q535 120 530 20M760 128L962 131M760 128Q740 60 720 40M793 122Q760 50 740 20M863 125Q865 100 875 75L860 30M915 120L918 40L930 100L935 20M950 130L945 60M970 20L1025 68Q1045 60 1040 20M875 55L915 40",
  ],
};

function DoodleBand({ band, offset }: { band: Band; offset: number }) {
  const labels = band.labels.filter(([, x]) => {
    const left = band.x + x / band.sx + offset;
    return left > 900 && left < 1950;
  });
  return (
    <g transform={`translate(${band.x + offset} ${band.y}) scale(${1 / band.sx} ${1 / band.sy})`}>
      {band.dots.map(([x, y, r], i) => (
        <ellipse key={i} cx={x} cy={y} rx={(r + 0.4) * band.sx} ry={(r + 0.4) * band.sy} vectorEffect="non-scaling-stroke" />
      ))}
      {band.stamps.map(([kind, x, y, rotation = 0, size = 1], i) => (
        <path
          key={i}
          d={shapes[kind]}
          transform={`translate(${x} ${y}) scale(${band.sx} ${band.sy}) rotate(${rotation}) scale(${size})`}
          vectorEffect="non-scaling-stroke"
        />
      ))}
      {labels.map(([text, x, y, size, rotation], i) => (
        <text
          key={i}
          fontSize={size}
          textAnchor="middle"
          fontFamily="Inter, sans-serif"
          fontWeight="600"
          transform={`translate(${x} ${y}) scale(${band.sx} ${band.sy}) rotate(${rotation}) translate(0 ${size * 0.2})`}
          strokeWidth="1.6"
        >
          {text}
        </text>
      ))}
      {band.paths.map((d, i) => (
        <path key={i} d={d} vectorEffect="non-scaling-stroke" />
      ))}
    </g>
  );
}

function Wallpaper() {
  return (
    <svg
      className="absolute inset-0 h-[1300px] w-[1990px]"
      viewBox="6 106 1990 1300"
      fill="none"
      stroke="#212322"
      strokeWidth="2.2"
      strokeLinecap="round"
      strokeLinejoin="round"
      aria-hidden
    >
      {[-1, 0, 1, 2].map((n) => (
        <g key={n}>
          <DoodleBand band={top} offset={n * PERIOD} />
          <DoodleBand band={middle} offset={n * PERIOD} />
          <DoodleBand band={bottom} offset={n * PERIOD} />
        </g>
      ))}
    </svg>
  );
}

/* ---------- Emoji ---------- */

type EmojiName = "memo" | "person" | "cake" | "phone" | "email" | "clock" | "calendar" | "check" | "stopwatch" | "smile";

const appColors = ["#5fd35f", "#e8e8e8", "#b78be0", "#8a8a8a", "#4fb4f0", "#dddddd", "#e6c34a", "#5bd0c8", "#f0e05a", "#ffffff", "#e05a9a", "#5a5a5a", "#46b1ee", "#ffffff", "#58c4f0", "#f08a2c", "#ffffff", "#f2d35e", "#707070", "#555555", "#57b8ef", "#e05555", "#eeeeee", "#222222"];

const emojiArt: Record<EmojiName, ReactNode> = {
  memo: (
    <>
      <path d="M3 0h28v33H3z" fill="#ecece9" />
      <path d="M5.500 4.500h3m1 0h4m2 .5h3m2-.5h5M5.500 7.500h5m2 0h2m2 0h6M5.500 10.500h3m2 0h5m2 0h2M5.500 13.500h6m2 0h4M5.500 16.500h2m2 0h5M5.500 19.500h5M5.500 22.500h4M5.500 25.500h4M5.500 28.500h6" stroke="#a2a2a0" strokeWidth="1" />
      <path d="M12 31l2-7L26 12l5 5-12 12z" fill="#f6c22f" />
      <path d="M14.500 26L27 13.500" stroke="#ffe37a" strokeWidth="2" />
      <path d="M17.500 29L30 17" stroke="#d8941c" strokeWidth="1.600" />
      <path d="M12 31l2-7 5 5z" fill="#ecc893" />
      <path d="M11.500 31.500l1.200-3.500 2.500 2.500z" fill="#333" />
      <path d="M25 13l2-2.500q3-1.500 5 2t-1 5z" fill="#e98b96" />
      <path d="M24 14l2-2 5 5-2 2z" fill="#b9bdc1" />
    </>
  ),
  person: (
    <>
      <defs>
        <linearGradient id="bust" x1="0" y1="0" x2="0" y2="1">
          <stop offset="0" stopColor="#86a6c3" />
          <stop offset="1" stopColor="#4c6a90" />
        </linearGradient>
      </defs>
      <path d="M16.500 0C22 0 25.500 4 25.300 10c-.2 5-2 8.500-4.300 11-.5 3 .5 4 5 5 5 1.200 7 2.500 7 7H0c0-4.500 2-5.800 7-7 4.500-1 5.500-2 5-5-2.300-2.500-4-6-4.300-11C7.500 4 11 0 16.500 0z" fill="url(#bust)" />
    </>
  ),
  cake: (
    <>
      <path d="M2.500 14v11.500Q4 31.500 16.500 31.500T30.500 25.500V14z" fill="#e3e0db" />
      <ellipse cx="16.500" cy="14" rx="14" ry="5.500" fill="#f8f7f4" />
      <path d="M2.500 14.500Q3 21.500 7 19.500T14 21t7-.5 6-1 3.500-4.500" fill="#f8f7f4" />
      <path d="M7 4h4.500v10H7zM14.300 4h4.500v11h-4.500zM21.700 4h4.500v10h-4.500z" fill="#f3ecda" />
      <path d="M10 4h1.500v10H10zM17.300 4h1.500v11h-1.500zM24.700 4h1.500v10h-1.500z" fill="#cfc4ab" />
      <path d="M9.200 0q2 2.500 0 5-2-2.500 0-5zM16.500 0q2 2.500 0 5-2-2.500 0-5zM23.900 0q2 2.500 0 5-2-2.500 0-5z" fill="#d9c64a" stroke="#d9c64a" />
      <g fill="#a31733">
        <ellipse cx="5.300" cy="14" rx="1.800" ry="2.300" /><ellipse cx="13" cy="15.800" rx="1.700" ry="2.200" /><ellipse cx="20" cy="15.800" rx="1.700" ry="2.200" /><ellipse cx="27.700" cy="14" rx="1.800" ry="2.300" />
        <ellipse cx="12.800" cy="8" rx="1" ry="1.500" /><ellipse cx="20.300" cy="8" rx="1" ry="1.500" />
      </g>
    </>
  ),
  phone: (
    <>
      <rect x="7.800" y="0.500" width="18" height="32" rx="2.500" fill="#0b0b0b" stroke="#55585a" />
      {appColors.map((color, i) => (
        <rect key={i} x={10.300 + (i % 4) * 3.600} y={4 + Math.floor(i / 4) * 3.900} width="2.300" height="2.300" rx=".5" fill={color} />
      ))}
      <path d="M10.200 28.300h2.500v2.500h-2.500zm7.200 0h2.500v2.500h-2.500z" fill="#65d468" />
      <path d="M13.800 28.300h2.500v2.500h-2.500zm7.200 0h2.500v2.500H21z" fill="#d9e8f5" />
    </>
  ),
  email: (
    <>
      <path d="M0 6h33v22H0z" fill="#d6d8da" />
      <path d="M0 6h33L16.500 19z" fill="#e4e5e6" />
      <path d="M0 6l13 12M33 6L20 18M0 28l12-11M33 28L21 17" stroke="#a9abad" />
      <path d="M21 11.500h-7v11.500h7M14 17.200h6" fill="none" stroke="#3f87e6" strokeWidth="3" />
      <path d="M21 11h-7v11.500h7M14 16.700h6" fill="none" stroke="#68a5f2" strokeWidth="1.500" />
    </>
  ),
  clock: (
    <>
      <defs>
        <radialGradient id="dial" cx=".5" cy=".42" r=".58">
          <stop offset=".55" stopColor="#f7f7f7" />
          <stop offset="1" stopColor="#9d9da0" />
        </radialGradient>
      </defs>
      <circle cx="16.500" cy="16.500" r="16.500" fill="#a9b6c8" />
      <circle cx="16.500" cy="17.300" r="15" fill="url(#dial)" />
      <path d="M16.500 18V4.500M16.500 18l4-8" stroke="#9a9a9c" strokeWidth="1.800" />
    </>
  ),
  calendar: (
    <>
      <path d="M0 0h33v12.500H0z" fill="#ab5457" />
      <path d="M0 12h33v21H0z" fill="#dedede" />
      <path d="M19 6.500v4m2-4v4m2-4v4m2-4v4m2-4v4m2-4v4m2-4v4" stroke="#b97073" strokeWidth=".7" />
      <circle cx="7.500" cy="2.300" r="1.500" fill="#2a2a2a" /><circle cx="25.500" cy="2.300" r="1.500" fill="#2a2a2a" />
      <text x="1.500" y="10.500" fontSize="7.500" fontWeight="600" letterSpacing="-0.300" fontFamily="Inter, sans-serif" fill="#e3c1c2">JUL</text>
      <text x="16.500" y="30" fontSize="20" textAnchor="middle" letterSpacing="-0.800" fontFamily="Inter, sans-serif" fill="#1f1f1f">17</text>
    </>
  ),
  check: (
    <>
      <defs>
        <linearGradient id="tick" x1="0" y1="0" x2="0" y2="1">
          <stop offset="0" stopColor="#7ad65b" />
          <stop offset=".2" stopColor="#4fc03a" />
          <stop offset="1" stopColor="#52b63a" />
        </linearGradient>
      </defs>
      <rect x="0.300" y="0.300" width="32.400" height="32.400" rx="4.500" fill="url(#tick)" stroke="#3d9c2b" strokeWidth=".6" />
      <path d="M5.500 17l3-1.500 4.500 6.500Q17 12 24 5.500l3 .8Q18.500 15 15 27h-3.500Q9 21.500 5.500 17z" fill="#fff" />
    </>
  ),
  stopwatch: (
    <>
      <path d="M14 0h5v6h-5z" fill="#6f7174" />
      <path d="M26 6l3.500 3" stroke="#7b7e82" strokeWidth="3" />
      <circle cx="16.500" cy="18.500" r="14" fill="#8f98a5" />
      <circle cx="16.500" cy="18.500" r="12" fill="#f1f1f1" />
      <circle cx="16.500" cy="18.500" r="10.300" fill="none" stroke="#909090" strokeWidth="1.500" strokeDasharray="1 4.390" />
      <path d="M16.500 19L10.500 15M16.500 19l8-5" stroke="#333" strokeWidth="1.200" />
      <path d="M16.500 21V8" stroke="#dd7f6c" />
    </>
  ),
  smile: (
    <>
      <defs>
        <radialGradient id="face" cx=".5" cy=".35" r=".65">
          <stop offset="0" stopColor="#ffe669" />
          <stop offset=".65" stopColor="#fbc63f" />
          <stop offset="1" stopColor="#e7952a" />
        </radialGradient>
      </defs>
      <circle cx="16.500" cy="16" r="15.300" fill="url(#face)" />
      <circle cx="7" cy="19" r="4" fill="#f5843c" opacity=".45" /><circle cx="26" cy="19" r="4" fill="#f5843c" opacity=".45" />
      <path d="M8 14q2.500-6 5 0M20 14q2.500-6 5 0" fill="none" stroke="#6b3f12" strokeWidth="1.800" strokeLinecap="round" />
      <path d="M8.500 20q8 8.500 16 0" fill="none" stroke="#7a4413" strokeWidth="1.800" strokeLinecap="round" />
    </>
  ),
};

function Emoji({ name, className = "" }: { name: EmojiName; className?: string }) {
  return (
    <svg viewBox="0 0 33 33" className={`h-[33px] w-[33px] shrink-0 ${className}`} aria-hidden>
      {emojiArt[name]}
    </svg>
  );
}

/* ---------- Messages ---------- */

function Row({
  icon,
  iconClass = "",
  size = "h-8 leading-8",
  className = "",
  children,
}: {
  icon?: EmojiName;
  iconClass?: string;
  size?: string;
  className?: string;
  children: ReactNode;
}) {
  return (
    <div className={`flex whitespace-pre ${size} ${className}`}>
      {icon && <Emoji name={icon} className={`mr-[10px] ml-[2px] ${iconClass}`} />}
      <span>{children}</span>
    </div>
  );
}

const TALL = "h-[33px] leading-[35px]";

function Rule({ className }: { className: string }) {
  return (
    <div className="flex h-8 pt-[14px]">
      <div className={`flex h-[4px] w-[547px] ${className}`}>
        {Array.from({ length: 21 }, (_, i) => (
          <span key={i} className="flex-1 border-r border-white/50 last:border-0" />
        ))}
      </div>
    </div>
  );
}

function Tail({ side, className }: { side: "left" | "right"; className: string }) {
  return (
    <svg
      viewBox="0 0 36 46"
      className={`absolute bottom-0 h-[46px] w-[36px] ${side === "right" ? "-right-[11px]" : "-left-[11px] -scale-x-100"} ${className}`}
      aria-hidden
    >
      <path d="M8 0H25V18Q25 34 36 46Q25 47 16 40.500Z" fill="currentColor" />
    </svg>
  );
}

function Detected({ children }: { children: ReactNode }) {
  return <span className="underline decoration-white/35 decoration-2 underline-offset-[4px]">{children}</span>;
}

function Link({ className = "", children }: { className?: string; children: ReactNode }) {
  return <span className={`text-[#5bbe6a] underline decoration-2 underline-offset-[4px] ${className}`}>{children}</span>;
}

type Answers = { name: string; age: string; phone: string; email: string; date: string; rest: string };

function ReservationForm({ answers, intro, ruleClass, time }: { answers?: Answers; intro?: boolean; ruleClass: string; time: ReactNode }) {
  return (
    <>
      {intro ? (
        <>
          <Row size={TALL}>
            <span className="flex">
              Mari atur reservasi Anda!
              <Emoji name="calendar" className="ml-[8px]" />
            </span>
          </Row>
          <Row size={TALL} className="mt-[33px] mb-[34px] tracking-[0.25px]">Mohon isi formulir berikut dengan lengkap:</Row>
        </>
      ) : (
        <div className="h-[133px]" />
      )}
      <Row icon="memo" iconClass="-mt-[1px]" size={TALL} className="tracking-[0.38px]">FORMULIR RESERVASI</Row>
      <Rule className={ruleClass} />
      <Row icon="person">Nama Lengkap:{answers && ` ${answers.name}`}</Row>
      <Row icon="cake">Umur:{answers && ` ${answers.age}`}</Row>
      <Row icon="phone">Nomor HP:{answers && <> <Link className="tracking-[0.95px]">{answers.phone}</Link></>}</Row>
      <Row icon="email">Email:{answers && <>{"  "}<Link className="tracking-[0.31px]">{answers.email}</Link></>}</Row>
      <Row icon="clock">Tanggal &amp; Jam:{answers && <>{"  "}<Detected>{answers.date}</Detected>{answers.rest}</>}</Row>
      <Rule className={ruleClass} />
      <Row size={TALL} className="mt-[35px] tracking-[0.34px]">
        Contoh: "<Detected>Besok jam 2</Detected> siang" atau "<Detected>15 Agustus jam 10</Detected> pagi"
      </Row>
      <Row size={TALL}>(Durasi: 2 jam per sesi)</Row>
      <div className="mt-[11px] flex h-[33px] justify-between leading-[35px]">
        <span className="font-medium tracking-[0.4px] text-[#5bbe6a]">Read more</span>
        {time}
      </div>
    </>
  );
}

function Time({ children, className }: { children: ReactNode; className: string }) {
  return <span className={`text-[22.5px] tracking-[0.9px] ${className}`}>{children}</span>;
}

export default function App() {
  return (
    <div className="relative h-[1406px] w-[1996px] overflow-hidden bg-linear-to-r from-[#26406f] via-[#2b4368] to-[#7fa0c2] font-['Inter',sans-serif] text-[25px] tracking-[0.2px] antialiased">
      <div className="mt-px flex h-[1405px] overflow-hidden rounded-tr-[22px] border-t border-[#0d0f10] bg-[#161817]">
        <div className="flex w-full overflow-hidden rounded-tr-[21px] border-t-2 border-[#686b69]">
          <div className="w-[6px] shrink-0 border-r-2 border-[#383a39] bg-[#1b1c1c]" />
          <div className="flex min-w-0 flex-1 flex-col">
            <header className="relative z-10 flex h-[103px] shrink-0 items-start border-b border-[#4a4c4b] bg-[#242625] pt-[14px] pr-[33px] pl-[40px]">
              <div className="flex size-[72px] items-center justify-center rounded-full border border-[#1c3458] bg-[#10233f]">
                <svg viewBox="0 0 24 26" className="h-[26px] w-[24px]" fill="#659ff3" aria-hidden>
                  <ellipse cx="12.300" cy="6.700" rx="5.500" ry="6" />
                  <path d="M1 23Q2 14.500 12.200 14.500T23.500 23Q23.500 25.200 21.500 25.200H3Q1 25.200 1 23z" />
                </svg>
              </div>
              <div className="ml-[16px] pt-[6px]">
                <h1 className="text-[27px] leading-[32px] font-semibold tracking-[0.3px] text-[#e3e4e3]">Marsha Is Busy</h1>
                <p className="text-[24px] leading-[30px] text-[#a0a2a1]">online</p>
              </div>
              <div className="ml-auto flex items-start pt-[19px] text-[#b3b5b4]">
                <svg viewBox="0 0 42 32" className="h-[32px] w-[42px]" fill="none" stroke="currentColor" strokeWidth="2" strokeLinejoin="round" aria-hidden>
                  <rect x="1.500" y="4" width="28" height="25.500" rx="5" />
                  <path d="M29.500 14.500L38 7.500Q40 6.500 40 8.500V25Q40 27 38 26L29.500 19" />
                </svg>
                <svg viewBox="0 0 34 34" className="ml-[44px] h-[34px] w-[34px]" fill="none" stroke="currentColor" strokeWidth="2" strokeLinejoin="round" aria-hidden>
                  <path d="M3.300 4.600Q6.500 1.200 9.200 3.800L13.500 10Q14.600 12.300 12.200 14.200Q10.300 15.600 11.600 17.400Q14.300 21.600 18.300 24.200Q19.900 25 21.300 23.300Q23 21.300 25.400 22.400L31 26Q34 28.600 31 31.300Q27.500 34.200 22 32.200Q12 28.500 5.500 18.800Q-1 9 3.300 4.600Z" />
                </svg>
                <svg viewBox="0 0 34 34" className="ml-[46px] h-[34px] w-[34px]" fill="none" stroke="currentColor" aria-hidden>
                  <circle cx="13.300" cy="13.300" r="12" strokeWidth="2" />
                  <path d="M22 22L30.800 31" strokeWidth="3" strokeLinecap="round" />
                </svg>
              </div>
            </header>

            <main className="relative flex min-h-0 flex-1 flex-col overflow-hidden bg-[#161817] text-[#dfe0df]">
              <Wallpaper />

              <section className="relative -mt-[164px] ml-[32px] h-[560px] w-[846px] shrink-0 rounded-[24px] bg-[#242625] px-[20px] pt-[12px]">
                <Tail side="left" className="text-[#242625]" />
                <ReservationForm ruleClass="bg-[#dcdddc]" time={<Time className="mt-[5px] mr-px text-[#a0a2a1]">19.11</Time>} />
              </section>

              <section className="relative mt-[24px] mr-[30px] h-[560px] w-[884px] shrink-0 self-end rounded-[24px] bg-[#274b39] px-[20px] pt-[12px] text-[#dfe6e2]">
                <Tail side="right" className="text-[#274b39]" />
                <ReservationForm
                  intro
                  ruleClass="bg-[#dfe6e2]"
                  answers={{
                    name: "Marsha Baru mau reservasi",
                    age: "22",
                    phone: "081216501976",
                    email: "marshaalexis16@gmail.com",
                    date: "besok jam 6",
                    rest: " sore",
                  }}
                  time={
                    <span className="flex">
                      <Time className="mt-[5px] text-[#a2b3a9]">19.12</Time>
                      <svg viewBox="0 0 30 22" className="mt-[11px] ml-[7px] h-[22px] w-[30px]" fill="none" stroke="#61a3f5" strokeWidth="2.600" strokeLinecap="round" strokeLinejoin="round" aria-hidden>
                        <path d="M2 13.500L7.500 18.500L20 3M13.500 17.500L15 18.500L27.500 3" />
                      </svg>
                    </span>
                  }
                />
              </section>

              <section className="relative mt-[24px] ml-[32px] h-[286px] w-[598px] shrink-0 rounded-[24px] bg-[#242625] px-[20px] pt-[12px]">
                <Tail side="left" className="text-[#242625]" />
                <Row icon="check" size={TALL}>Reservasi berhasil!</Row>
                <Row icon="person" className="mt-[34px]">Nama: Marsha Baru mau reservasi</Row>
                <Row icon="calendar">Tanggal: 31 Juli 2025</Row>
                <Row icon="clock" className="tracking-[0.45px]">Waktu: 18:00 - 20:00</Row>
                <Row icon="stopwatch">Durasi: 2 jam</Row>
                <div className="mt-[32px] flex h-[33px] leading-[35px]">
                  <span>Terima kasih! Sampai jumpa di toko!</span>
                  <Emoji name="smile" className="ml-[9px]" />
                  <Time className="mt-[5px] ml-auto text-[#a0a2a1]">19.12</Time>
                </div>
              </section>

              <button className="absolute right-[16px] bottom-[6px] flex size-[64px] items-center justify-center rounded-full bg-[#272928]" aria-label="Scroll to bottom">
                <svg viewBox="0 0 28 16" className="mt-[2px] h-[16px] w-[28px]" fill="none" stroke="#a9abaa" strokeWidth="3" strokeLinecap="round" strokeLinejoin="round" aria-hidden>
                  <path d="M3 2L14 13L25 2" />
                </svg>
              </button>
            </main>
          </div>
        </div>
      </div>
    </div>
  );
}
